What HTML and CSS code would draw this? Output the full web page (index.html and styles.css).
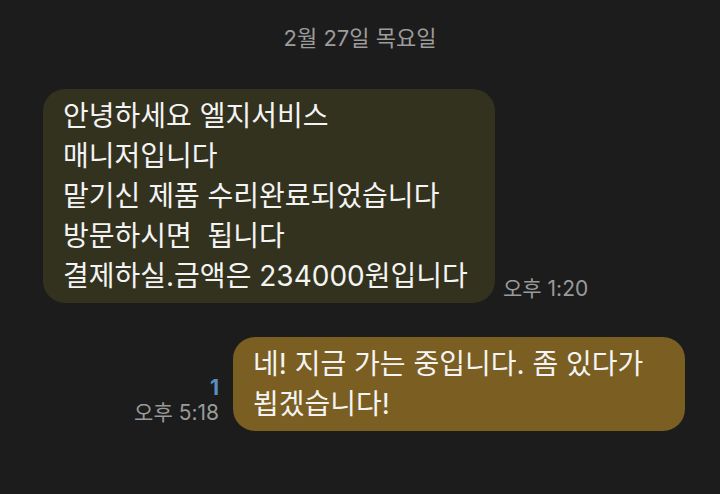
FILE: index.html
```html
<!DOCTYPE html>
<html lang="ko">
<head>
    <meta charset="UTF-8">
    <meta name="viewport" content="width=device-width, initial-scale=1.0">
    <title>문자</title>
    <link rel="stylesheet" href="styles.css">
</head>
<body>
    <div class="chat">
        <div class="date">2월 27일 목요일</div>

        <div class="row row-in">
            <div class="bubble bubble-in">
                안녕하세요 엘지서비스<br>
                매니저입니다<br>
                맡기신 제품 수리완료되었습니다<br>
                방문하시면&nbsp; 됩니다<br>
                결제하실.금액은 234000원입니다
            </div>
            <div class="meta">
                <div class="time">오후 1:20</div>
            </div>
        </div>

        <div class="row row-out">
            <div class="meta meta-out">
                <div class="unread">1</div>
                <div class="time">오후 5:18</div>
            </div>
            <div class="bubble bubble-out">네! 지금 가는 중입니다. 좀 있다가 뵙겠습니다!</div>
        </div>
    </div>
</body>
</html>
```

FILE: styles.css
```css
body {
    font-family: Inter, "Noto Sans CJK KR", sans-serif;
    margin: 0;
    padding: 0;
    background-color: #1c1c1c;
    color: #f4f4f4;
}
.chat {
    display: flex;
    flex-direction: column;
}
.date {
    text-align: center;
    font-size: 22px;
    line-height: 28px;
    color: #9c9c9c;
    padding-top: 24px;
}
.row {
    display: flex;
    align-items: flex-end;
}
.row-in {
    margin-top: 37px;
    padding-left: 43px;
}
.row-out {
    justify-content: flex-end;
    margin-top: 34px;
    padding-right: 35px;
}
.bubble {
    box-sizing: border-box;
    width: 452px;
    font-size: 28px;
    line-height: 40px;
    padding: 7px 20px 7px;
    border-radius: 22px;
    word-break: keep-all;
}
.bubble-in {
    background-color: #33321f;
}
.bubble-out {
    background-color: #7a5e22;
}
.meta {
    padding-left: 8px;
    padding-bottom: 2px;
}
.meta-out {
    text-align: right;
    padding-left: 0;
    padding-right: 14px;
    padding-bottom: 6px;
}
.time {
    font-size: 21px;
    line-height: 24px;
    color: #9a9a9a;
}
.unread {
    font-size: 21px;
    font-weight: 700;
    line-height: 26px;
    color: #5b8fc0;
}
```
